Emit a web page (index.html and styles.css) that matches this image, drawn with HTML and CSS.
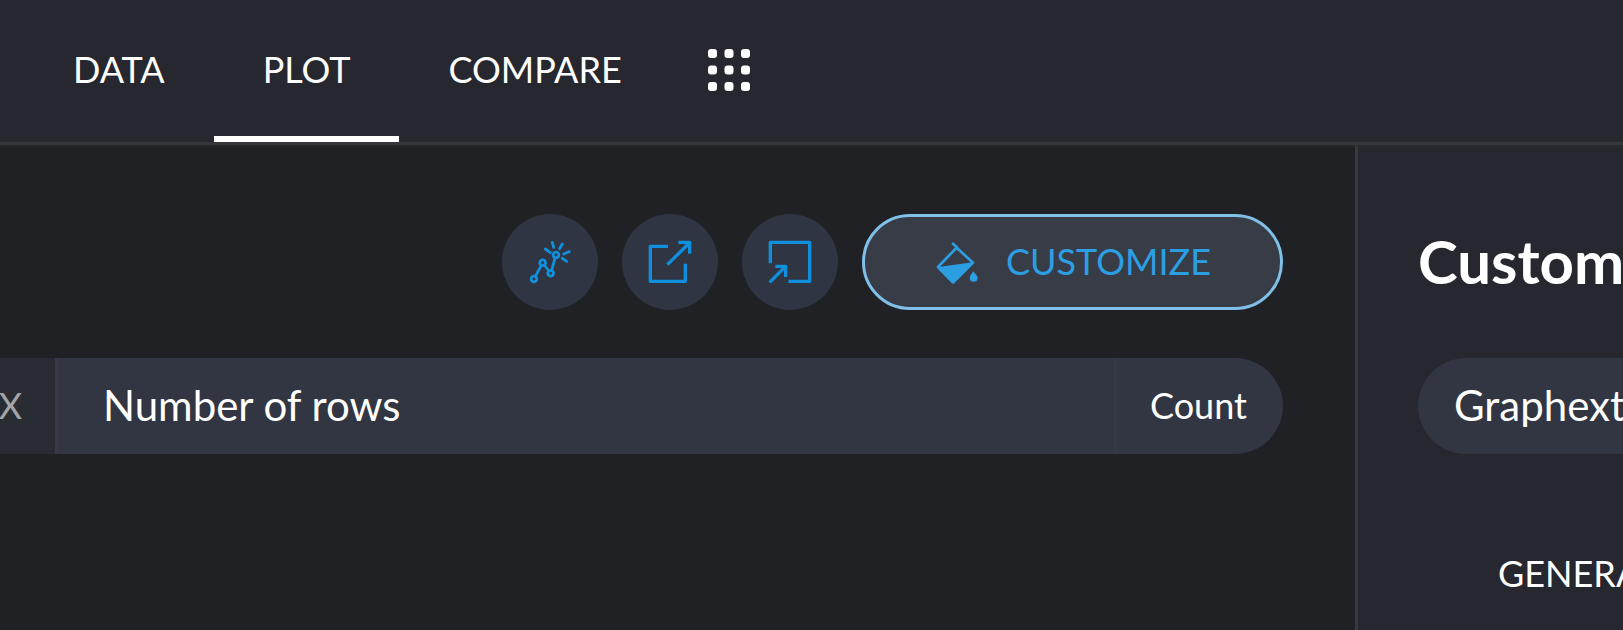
FILE: index.html
```html
<!DOCTYPE html>
<html lang="en">
<head>
<meta charset="utf-8">
<title>Plot</title>
<link rel="stylesheet" href="styles.css">
</head>
<body>
<header class="topbar">
  <nav class="tabs">
    <a class="tab" href="#data">DATA</a>
    <a class="tab tab-active" href="#plot" aria-current="page">PLOT</a>
    <a class="tab" href="#compare">COMPARE</a>
  </nav>
  <button class="apps" type="button" aria-label="More views">
    <svg width="42" height="42" viewBox="0 0 42 42" fill="currentColor" aria-hidden="true">
      <rect x="0" y="0" width="9" height="9" rx="3"/><rect x="16.500" y="0" width="9" height="9" rx="3"/><rect x="33" y="0" width="9" height="9" rx="3"/>
      <rect x="0" y="16.500" width="9" height="9" rx="3"/><rect x="16.500" y="16.500" width="9" height="9" rx="3"/><rect x="33" y="16.500" width="9" height="9" rx="3"/>
      <rect x="0" y="33" width="9" height="9" rx="3"/><rect x="16.500" y="33" width="9" height="9" rx="3"/><rect x="33" y="33" width="9" height="9" rx="3"/>
    </svg>
  </button>
</header>
<div class="workspace">
  <main class="plot">
    <div class="toolbar">
      <button class="round" type="button" aria-label="Highlight points">
        <svg class="icon" viewBox="108 114 144 144" fill="none" stroke="currentColor" stroke-width="8.500" stroke-linecap="round" aria-hidden="true">
          <circle cx="132" cy="237" r="8.500"/><circle cx="158" cy="188" r="8.500"/><circle cx="182" cy="220" r="8.500"/><circle cx="198" cy="165" r="8.500"/>
          <path d="M136 229L154 196M163 195L177 213M185 211L195 174M166 147L181 158M187 127L191 142M217 132L209 146M238 155L221 162M230 184L217 175"/>
        </svg>
      </button>
      <button class="round" type="button" aria-label="Open in new window">
        <svg class="icon" viewBox="108 114 144 144" fill="none" stroke="currentColor" stroke-width="10" stroke-linejoin="round" aria-hidden="true">
          <path d="M174 139H121V244H226V191M172 194L238 129M205 127H239V161"/>
        </svg>
      </button>
      <button class="round" type="button" aria-label="Insert">
        <svg class="icon" viewBox="108 114 144 144" fill="none" stroke="currentColor" stroke-width="10" stroke-linejoin="round" aria-hidden="true">
          <path d="M121 190V127H239V244H175M119 247L167 199M136 199H167V231"/>
        </svg>
      </button>
      <button class="customize" type="button">
        <svg class="icon" viewBox="252 114 144 144" aria-hidden="true">
          <path d="M309 131L322 143M320 143L369 188L309 248L264 201Z" fill="none" stroke="currentColor" stroke-width="8" stroke-linejoin="round" stroke-linecap="round"/>
          <path d="M264 201L369 187L309 249Z" fill="currentColor"/>
          <path d="M370 214C374 221 383 227 383 234A12 11 0 0 1 359 234C359 227 366 221 370 214Z" fill="currentColor"/>
        </svg>
        <span>CUSTOMIZE</span>
      </button>
    </div>
    <div class="axis">
      <label class="axis-name" for="x-axis">X</label>
      <input class="axis-value" id="x-axis" type="text" value="Number of rows">
      <select class="axis-mode" aria-label="Aggregation"><option>Count</option></select>
    </div>
  </main>
  <aside class="panel">
    <h2 class="panel-title">Customize</h2>
    <select class="theme" aria-label="Theme"><option>Graphext</option></select>
    <button class="section" type="button">GENERAL</button>
  </aside>
</div>
</body>
</html>
```
FILE: styles.css
```css
* { box-sizing: border-box; }

body {
  margin: 0;
  height: 100vh;
  display: flex;
  flex-direction: column;
  overflow: hidden;
  background: #1f2124;
  color: #fff;
  font-family: Lato, sans-serif;
  font-size: 36px;
  line-height: 44px;
}

button, input, select {
  margin: 0;
  padding: 0;
  border: 0;
  border-radius: 0;
  background: none;
  color: inherit;
  font: inherit;
  appearance: none;
  outline: 0;
}

.topbar {
  position: relative;
  z-index: 1;
  display: flex;
  flex: none;
  height: 145px;
  padding-left: 24px;
  background: #26272f;
  border-bottom: 3px solid #36373c;
  box-shadow: 0 1px 3px #2e3034;
}

.tabs { display: flex; }

.tab {
  display: flex;
  align-items: center;
  padding: 2px 49px 0;
  border-bottom: 6px solid transparent;
  color: #fff;
  text-decoration: none;
}

.tab-active { border-bottom-color: #fff; }

.apps {
  display: flex;
  align-items: center;
  padding: 0 37px 2px;
}

.workspace {
  display: flex;
  flex: 1;
  min-height: 0;
}

.plot {
  flex: 1;
  min-width: 0;
  display: flex;
  flex-direction: column;
  gap: 48px;
  padding: 69px 72px 0 0;
}

.toolbar {
  display: flex;
  justify-content: flex-end;
  gap: 24px;
}

.icon {
  flex: none;
  width: 48px;
  height: 48px;
}

.round {
  display: flex;
  align-items: center;
  justify-content: center;
  width: 96px;
  height: 96px;
  border-radius: 50%;
  background: #2f3542;
  color: #108fdc;
}

.customize {
  display: flex;
  align-items: center;
  gap: 24px;
  height: 96px;
  padding: 0 69px;
  border: 3px solid #7fbfe8;
  border-radius: 48px;
  background: #373c47;
  color: #2c9fe3;
}

.customize span { padding-bottom: 2px; }

.axis {
  display: flex;
  height: 96px;
  margin-left: -42px;
  border-radius: 48px;
  overflow: hidden;
  background: #323642;
}

.axis-name {
  display: flex;
  align-items: center;
  justify-content: flex-end;
  width: 97px;
  padding: 0 33px 2px 0;
  background: #292d33;
  color: #a2a4a8;
}

.axis-value {
  flex: 1;
  min-width: 0;
  padding: 0 45px 2px;
  border-left: 3px solid #363a45;
  font-size: 42px;
}

.axis-mode {
  padding: 0 36px 2px 33px;
  border-left: 3px solid #353945;
}

.panel {
  flex: 0 0 268px;
  display: flex;
  flex-direction: column;
  align-items: flex-start;
  padding: 80px 0 0 60px;
  border-left: 3px solid #383a42;
  background: #26272f;
  overflow: hidden;
}

.panel-title {
  margin: 0;
  font-size: 60px;
  font-weight: 700;
  line-height: 72px;
}

.theme {
  flex: none;
  width: 480px;
  height: 96px;
  margin-top: 61px;
  padding: 0 36px 2px;
  border-radius: 48px;
  background: #323642;
  font-size: 42px;
}

.section {
  flex: none;
  margin-top: 97px;
  padding-left: 80px;
}
```
